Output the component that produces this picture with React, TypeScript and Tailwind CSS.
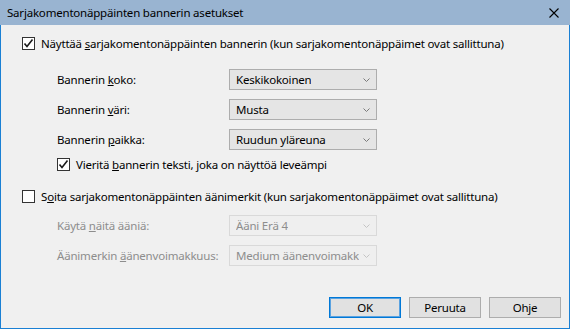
import React from "react";

const font = { fontFamily: '"Noto Sans", "Segoe UI", sans-serif' };

function Check({ checked }: { checked?: boolean }) {
  return (
    <span className="w-[13px] h-[13px] shrink-0 border border-[#333333] bg-white flex items-center justify-center">
      {checked && (
        <svg width="11" height="11" viewBox="0 0 11 11">
          <path d="M1.5 5.5 L4 8.5 L9.5 1.5" fill="none" stroke="#1a1a1a" strokeWidth="1.6" />
        </svg>
      )}
    </span>
  );
}

function Combo({ value, disabled }: { value: string; disabled?: boolean }) {
  return (
    <div
      className={
        "w-[148px] h-[21px] flex items-center justify-between pl-[6px] pr-[6px] border overflow-hidden " +
        (disabled ? "border-[#d9d9d9] bg-[#efefef] text-[#8d8d8d]" : "border-[#adadad] bg-[#e5e5e5] text-black")
      }
    >
      <span className="whitespace-nowrap overflow-hidden">{value}</span>
      <svg width="7" height="4" viewBox="0 0 7 4" className="shrink-0 ml-1">
        <path d="M0.5 0.5 L3.5 3.5 L6.5 0.5" fill="none" stroke={disabled ? "#c4c4c4" : "#7a7a7a"} strokeWidth="1" />
      </svg>
    </div>
  );
}

function Row({ label, children, disabled }: { label: React.ReactNode; children: React.ReactNode; disabled?: boolean }) {
  return (
    <div className="flex items-center pl-[56px]">
      <span className={"w-[172px] whitespace-nowrap " + (disabled ? "text-[#8d8d8d]" : "")}>{label}</span>
      {children}
    </div>
  );
}

function Btn({ label, primary }: { label: string; primary?: boolean }) {
  return (
    <button
      className={
        "w-[72px] h-[21px] flex items-center justify-center bg-[#e1e1e1] border " +
        (primary ? "border-[#0078d7] outline outline-1 outline-[#5aa2e0] -outline-offset-2" : "border-[#adadad]")
      }
    >
      {label}
    </button>
  );
}

export default function App() {
  return (
    <div
      className="w-[570px] h-[329px] border border-[#1a80d4] border-t-0 bg-[#f0f0f0] text-[11.5px] tracking-[-0.2px] leading-[15px] text-black flex flex-col"
      style={font}
    >
      <div className="h-[25px] bg-[#99b4d1] flex items-center justify-between pl-[7px] pr-[11px] -mx-px">
        <span>Sarjakomentonäppäinten bannerin asetukset</span>
        <svg width="10" height="10" viewBox="0 0 10 10">
          <path d="M0.5 0.5 L9.5 9.5 M9.5 0.5 L0.5 9.5" stroke="#000" strokeWidth="1.1" />
        </svg>
      </div>

      <div className="flex flex-col pt-[11px]">
        <label className="flex items-center gap-[6px] pl-[21px]">
          <Check checked />
          <span>
            Näyttää <u>s</u>arjakomentonäppäinten bannerin (kun sarjakomentonäppäimet ovat sallittuna)
          </span>
        </label>

        <div className="flex flex-col gap-[9px] mt-[18px]">
          <Row label={<>Bannerin <u>k</u>oko:</>}>
            <Combo value="Keskikokoinen" />
          </Row>
          <Row label={<>Bannerin <u>v</u>äri:</>}>
            <Combo value="Musta" />
          </Row>
          <Row label={<>Bannerin <u>p</u>aikka:</>}>
            <Combo value="Ruudun yläreuna" />
          </Row>
        </div>

        <label className="flex items-center gap-[6px] pl-[56px] mt-[7px]">
          <Check checked />
          <span>
            Vieritä <u>b</u>annerin teksti, joka on näyttöä leveämpi
          </span>
        </label>

        <label className="flex items-center gap-[6px] pl-[21px] mt-[17px]">
          <Check />
          <span>
            S<u>o</u>ita sarjakomentonäppäinten äänimerkit (kun sarjakomentonäppäimet ovat sallittuna)
          </span>
        </label>

        <div className="flex flex-col gap-[9px] mt-[11px]">
          <Row disabled label={<>Käytä <u>n</u>äitä ääniä:</>}>
            <Combo disabled value="Ääni Erä 4" />
          </Row>
          <Row disabled label={<>Äänimerkin <u>ä</u>änenvoimakkuus:</>}>
            <Combo disabled value="Medium äänenvoimakkuus" />
          </Row>
        </div>

        <div className="flex justify-end gap-[8px] pr-[8px] mt-[31px]">
          <Btn label="OK" primary />
          <Btn label="Peruuta" />
          <Btn label="Ohje" />
        </div>
      </div>
    </div>
  );
}
